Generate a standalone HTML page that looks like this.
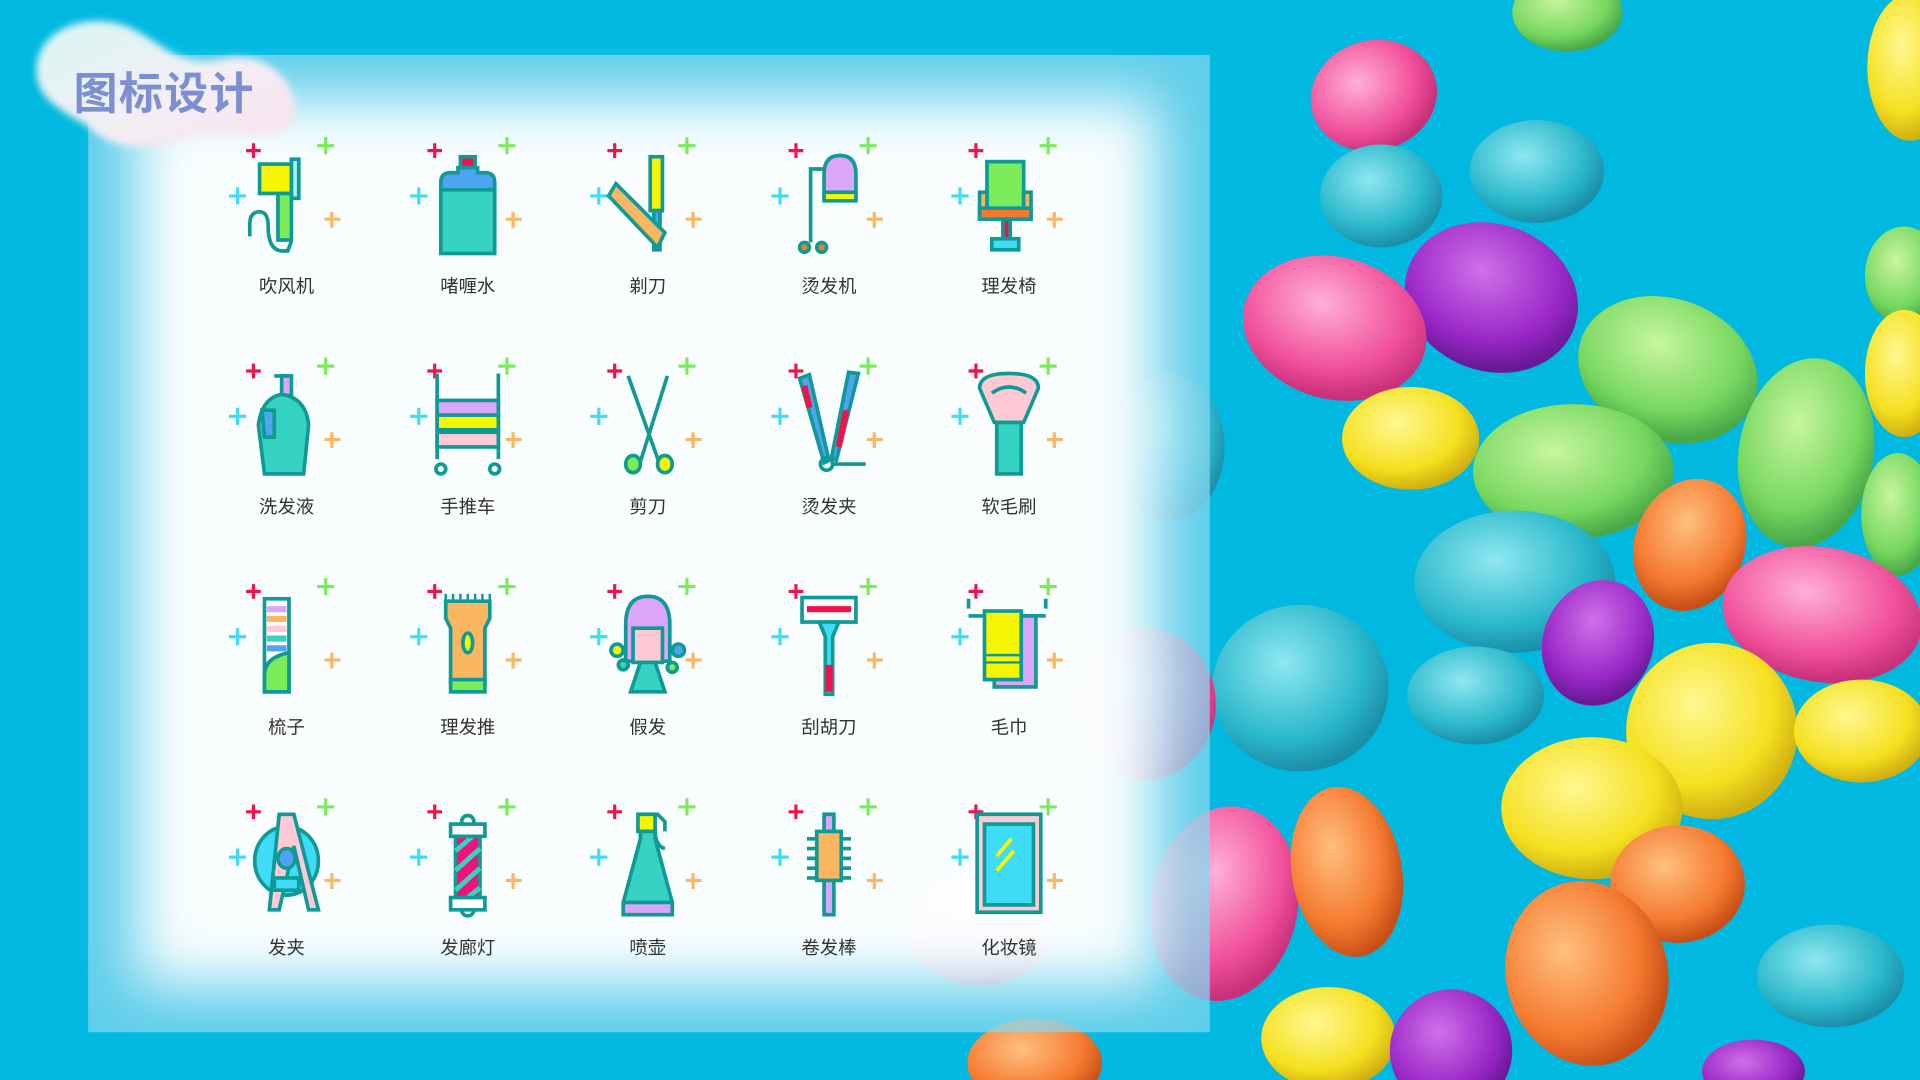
<!DOCTYPE html>
<html><head><meta charset="utf-8"><style>html,body{margin:0;padding:0;width:1920px;height:1080px;overflow:hidden;background:#00b8e0}svg{display:block}</style></head>
<body>
<svg width="1920" height="1080" viewBox="0 0 1568 882" preserveAspectRatio="none" xmlns="http://www.w3.org/2000/svg">
<defs>
<radialGradient id="gP" cx="40%" cy="35%" r="65%"><stop offset="0" stop-color="#ffb0d8"/><stop offset=".7" stop-color="#f0509a"/><stop offset="1" stop-color="#c8307a"/></radialGradient>
<radialGradient id="gT" cx="40%" cy="35%" r="65%"><stop offset="0" stop-color="#8fe8f0"/><stop offset=".7" stop-color="#2bb8cc"/><stop offset="1" stop-color="#1a8fa8"/></radialGradient>
<radialGradient id="gV" cx="40%" cy="35%" r="65%"><stop offset="0" stop-color="#d070e8"/><stop offset=".7" stop-color="#9a28c8"/><stop offset="1" stop-color="#6a1898"/></radialGradient>
<radialGradient id="gG" cx="40%" cy="35%" r="65%"><stop offset="0" stop-color="#c8f5a0"/><stop offset=".7" stop-color="#78d860"/><stop offset="1" stop-color="#48a848"/></radialGradient>
<radialGradient id="gY" cx="40%" cy="35%" r="65%"><stop offset="0" stop-color="#fff890"/><stop offset=".7" stop-color="#f5e020"/><stop offset="1" stop-color="#d0b010"/></radialGradient>
<radialGradient id="gO" cx="40%" cy="35%" r="65%"><stop offset="0" stop-color="#ffc080"/><stop offset=".7" stop-color="#f57a30"/><stop offset="1" stop-color="#c85018"/></radialGradient>
<linearGradient id="blob" x1="0" y1="0" x2="1" y2="1"><stop offset="0" stop-color="#d8f6f4"/><stop offset=".6" stop-color="#f4eef4"/><stop offset="1" stop-color="#fbe0ec"/></linearGradient>
<filter id="bl" x="-20%" y="-20%" width="140%" height="140%"><feGaussianBlur stdDeviation="24"/></filter>
<filter id="bl2"><feGaussianBlur stdDeviation="3"/></filter>
</defs>
<rect width="1568" height="882" fill="#00b8e0"/>
<g>
<ellipse cx="1280" cy="10" rx="45" ry="32" fill="url(#gG)"/>
<ellipse cx="1560" cy="55" rx="35" ry="60" fill="url(#gY)"/>
<ellipse cx="1122" cy="78" rx="52" ry="45" transform="rotate(-15 1122 78)" fill="url(#gP)"/>
<ellipse cx="1128" cy="160" rx="50" ry="42" fill="url(#gT)"/>
<ellipse cx="1255" cy="140" rx="55" ry="42" fill="url(#gT)"/>
<ellipse cx="1218" cy="243" rx="72" ry="60" transform="rotate(20 1218 243)" fill="url(#gV)"/>
<ellipse cx="1090" cy="268" rx="76" ry="58" transform="rotate(15 1090 268)" fill="url(#gP)"/>
<ellipse cx="1362" cy="302" rx="75" ry="58" transform="rotate(20 1362 302)" fill="url(#gG)"/>
<ellipse cx="1555" cy="225" rx="32" ry="40" fill="url(#gG)"/>
<ellipse cx="1555" cy="305" rx="32" ry="52" fill="url(#gY)"/>
<ellipse cx="1475" cy="370" rx="55" ry="78" transform="rotate(10 1475 370)" fill="url(#gG)"/>
<ellipse cx="1152" cy="358" rx="56" ry="42" fill="url(#gY)"/>
<ellipse cx="1285" cy="385" rx="82" ry="55" fill="url(#gG)"/>
<ellipse cx="1380" cy="445" rx="45" ry="55" transform="rotate(20 1380 445)" fill="url(#gO)"/>
<ellipse cx="1550" cy="420" rx="30" ry="50" fill="url(#gG)"/>
<ellipse cx="1237" cy="475" rx="82" ry="58" fill="url(#gT)"/>
<ellipse cx="1305" cy="525" rx="45" ry="52" transform="rotate(20 1305 525)" fill="url(#gV)"/>
<ellipse cx="1488" cy="502" rx="82" ry="55" transform="rotate(10 1488 502)" fill="url(#gP)"/>
<ellipse cx="1062" cy="562" rx="72" ry="68" fill="url(#gT)"/>
<ellipse cx="1205" cy="568" rx="56" ry="40" fill="url(#gT)"/>
<ellipse cx="1398" cy="597" rx="70" ry="72" fill="url(#gY)"/>
<ellipse cx="1520" cy="597" rx="55" ry="42" fill="url(#gY)"/>
<ellipse cx="1300" cy="660" rx="74" ry="58" fill="url(#gY)"/>
<ellipse cx="1000" cy="738" rx="60" ry="80" transform="rotate(10 1000 738)" fill="url(#gP)"/>
<ellipse cx="1100" cy="712" rx="45" ry="70" transform="rotate(-10 1100 712)" fill="url(#gO)"/>
<ellipse cx="1370" cy="722" rx="55" ry="48" fill="url(#gO)"/>
<ellipse cx="1296" cy="795" rx="66" ry="76" transform="rotate(-15 1296 795)" fill="url(#gO)"/>
<ellipse cx="1495" cy="797" rx="60" ry="42" fill="url(#gT)"/>
<ellipse cx="1085" cy="848" rx="55" ry="42" fill="url(#gY)"/>
<ellipse cx="1185" cy="858" rx="50" ry="50" fill="url(#gV)"/>
<ellipse cx="845" cy="868" rx="55" ry="36" fill="url(#gO)"/>
<ellipse cx="1432" cy="875" rx="42" ry="26" fill="url(#gV)"/>
<ellipse cx="935" cy="575" rx="58" ry="62" fill="url(#gP)"/>
<ellipse cx="955" cy="365" rx="45" ry="60" fill="url(#gT)"/>
<ellipse cx="800" cy="755" rx="60" ry="50" fill="url(#gP)"/>
</g>
<!-- panel -->
<rect x="72" y="45" width="916" height="798" fill="#7fd6ee" opacity=".75"/>
<rect x="110" y="80" width="835" height="725" fill="#ffffff" opacity=".97" filter="url(#bl)"/>
<!-- title blob -->
<path d="M30,62 C26,25 70,8 105,22 C135,35 145,58 185,48 C235,40 255,95 230,106 C205,116 180,104 155,112 C125,124 92,124 72,103 C48,90 32,80 30,62Z" fill="url(#blob)" filter="url(#bl2)"/>
<text x="60" y="89" font-family="Liberation Sans, Noto Sans CJK SC, sans-serif" font-size="36" font-weight="bold" fill="#7c8fd3" letter-spacing="1">图标设计</text>

<g font-family="Liberation Sans, Noto Sans CJK SC, sans-serif" font-size="15" fill="#333" text-anchor="middle">
<text x="234" y="239">吹风机</text><text x="382" y="239">啫喱水</text><text x="529" y="239">剃刀</text><text x="677" y="239">烫发机</text><text x="824" y="239">理发椅</text>
<text x="234" y="419">洗发液</text><text x="382" y="419">手推车</text><text x="529" y="419">剪刀</text><text x="677" y="419">烫发夹</text><text x="824" y="419">软毛刷</text>
<text x="234" y="599">梳子</text><text x="382" y="599">理发推</text><text x="529" y="599">假发</text><text x="677" y="599">刮胡刀</text><text x="824" y="599">毛巾</text>
<text x="234" y="779">发夹</text><text x="382" y="779">发廊灯</text><text x="529" y="779">喷壶</text><text x="677" y="779">卷发棒</text><text x="824" y="779">化妆镜</text>
</g>

<defs>
<g id="plus" stroke-width="2.6" fill="none">
<path d="M-33,-42 h12 M-27,-48 v12" stroke="#f2124a"/>
<path d="M25,-46 h14 M32,-53 v14" stroke="#7ceb5a"/>
<path d="M-47,-5 h14 M-40,-12 v14" stroke="#3fdcf7"/>
<path d="M31,14 h13 M37,8 v13" stroke="#fbb661"/>
</g>
</defs>

<g stroke="#109a96" stroke-width="3" stroke-linejoin="miter">
<g transform="translate(234,165)"><use href="#plus"/>
<rect x="-22" y="-31" width="26" height="24" fill="#f6f600"/><rect x="4" y="-35" width="6" height="32" fill="#a8f0f0"/>
<rect x="-7" y="-7" width="11" height="38" fill="#7ceb5a"/>
<path d="M-30,28 v-10 q0-10 8-10 q7 0 7 12 q0 20 12 20 h4 l3-8" fill="none"/></g>
<g transform="translate(382,165)"><use href="#plus"/>
<rect x="-6" y="-37" width="12" height="10" fill="#f2124a"/>
<path d="M-22,-10 v-6 q0-8 8-8 h6 v-4 h16 v4 h6 q8 0 8 8 v6z" fill="#4ea4f2"/>
<rect x="-22" y="-10" width="44" height="52" fill="#36d3c3"/></g>
<g transform="translate(529,165)"><use href="#plus"/>
<rect x="2" y="-37" width="10" height="44" fill="#f6f600"/><rect x="5" y="7" width="5" height="32" fill="#4ea4f2"/>
<path d="M-32,-5 l6,-10 l40,40 l-6,12z" fill="#fbb661"/></g>
<g transform="translate(677,165)"><use href="#plus"/>
<path d="M-15,33 v-60 h10" fill="none"/><path d="M-4,-5 v-18 q0-15 13-15 q13 0 13 15 v18z" fill="#dba6f7"/>
<rect x="-4" y="-8" width="26" height="7" fill="#f6f600"/>
<circle cx="-20" cy="37" r="4" fill="#f57a30"/><circle cx="-6" cy="37" r="4" fill="#f57a30"/></g>
<g transform="translate(824,165)"><use href="#plus"/>
<rect x="-18" y="-33" width="30" height="40" fill="#7ceb5a"/>
<rect x="-24" y="-8" width="6" height="22" fill="#fbb661"/><rect x="12" y="-8" width="6" height="22" fill="#fbb661"/>
<rect x="-24" y="5" width="42" height="9" fill="#f57a30"/><rect x="-5" y="14" width="6" height="16" fill="#f2124a"/>
<rect x="-14" y="30" width="22" height="9" fill="#3fdcf7"/></g>
<g transform="translate(234,345)"><use href="#plus"/>
<path d="M-10,-38 h10 v14" fill="none"/><rect x="-4" y="-38" width="8" height="16" fill="#dba6f7"/>
<path d="M-18,42 l-5-40 q3-22 19-25 q20 3 22 25 l-4 40z" fill="#36d3c3"/>
<path d="M-20,-10 h10 v22 h-8z" fill="#4ea4f2"/></g>
<g transform="translate(382,345)"><use href="#plus"/>
<path d="M-25,-40 v70 M25,-40 v70" fill="none"/>
<rect x="-25" y="-18" width="50" height="12" fill="#dba6f7"/><rect x="-25" y="-6" width="50" height="12" fill="#f6f600"/><rect x="-25" y="8" width="50" height="12" fill="#ffcad5"/>
<circle cx="-22" cy="38" r="4" fill="none"/><circle cx="22" cy="38" r="4" fill="none"/></g>
<g transform="translate(529,345)"><use href="#plus"/>
<path d="M-16,-38 l25,70 M16,-38 l-22,70" fill="none"/>
<ellipse cx="-12" cy="34" rx="6" ry="7" fill="#7ceb5a"/><ellipse cx="14" cy="34" rx="6" ry="7" fill="#f6f600"/></g>
<g transform="translate(677,345)"><use href="#plus"/>
<path d="M-24,-36 l8,-3 l16,70 l-4,2z" fill="#4ea4f2"/><path d="M-20,-30 l4,18" stroke="#f2124a" stroke-width="5"/>
<path d="M24,-40 l-8,-1 l-14,70 l4,2z" fill="#4ea4f2"/><path d="M14,-10 l-6,30" stroke="#f2124a" stroke-width="5"/>
<circle cx="-2" cy="34" r="5" fill="none"/><path d="M2,34 h28" fill="none"/></g>
<g transform="translate(824,345)"><use href="#plus"/>
<path d="M-12,0 l-12,-28 q0-12 24-12 q24 0 24 12 l-12 28z" fill="#ffcad5"/><path d="M-14,-24 q14-10 28 0" fill="none"/>
<rect x="-10" y="0" width="20" height="42" fill="#36d3c3"/></g>
<g transform="translate(234,525)"><use href="#plus"/>
<rect x="-18" y="-36" width="20" height="76" fill="#fff"/>
<rect x="-16" y="-30" width="16" height="5" fill="#dba6f7" stroke="none"/><rect x="-16" y="-22" width="16" height="5" fill="#fbb661" stroke="none"/><rect x="-16" y="-14" width="16" height="5" fill="#ffcad5" stroke="none"/><rect x="-16" y="-6" width="16" height="5" fill="#36d3c3" stroke="none"/><rect x="-16" y="2" width="16" height="5" fill="#4ea4f2" stroke="none"/>
<path d="M-18,40 v-14 q0-14 20-18 v32z" fill="#7ceb5a"/></g>
<g transform="translate(382,525)"><use href="#plus"/>
<path d="M-18,-34 v-6 M-12,-34 v-6 M-6,-34 v-6 M0,-34 v-6 M6,-34 v-6 M12,-34 v-6 M18,-34 v-6" fill="none" stroke-width="2"/>
<path d="M-18,-34 h36 v14 l-4,8 v45 h-28 v-45 l-4,-8z" fill="#fbb661"/>
<rect x="-14" y="30" width="28" height="10" fill="#7ceb5a"/><ellipse cx="0" cy="0" rx="4" ry="8" fill="#f6f600"/></g>
<g transform="translate(529,525)"><use href="#plus"/>
<path d="M-18,15 v-30 q0-23 18-23 q18 0 18 23 v30z" fill="#dba6f7"/>
<rect x="-12" y="-12" width="24" height="28" fill="#ffcad5"/>
<path d="M-6,16 l-8,24 h28 l-8,-24z" fill="#36d3c3"/>
<circle cx="-25" cy="6" r="5" fill="#f6f600"/><circle cx="-20" cy="18" r="4" fill="#36d3c3"/><circle cx="25" cy="6" r="5" fill="#4ea4f2"/><circle cx="20" cy="20" r="4" fill="#7ceb5a"/></g>
<g transform="translate(677,525)"><use href="#plus"/>
<rect x="-22" y="-37" width="44" height="20" fill="#fff"/><rect x="-18" y="-30" width="36" height="5" fill="#f2124a" stroke="none"/>
<path d="M-8,-17 l5,12 v47 h6 v-47 l5,-12z" fill="#3fdcf7"/><rect x="-3" y="18" width="6" height="22" fill="#f2124a" stroke="none"/></g>
<g transform="translate(824,525)"><use href="#plus"/>
<path d="M-33,-28 v-8 M30,-28 v-8 M-33,-22 h63" fill="none"/>
<rect x="-12" y="-22" width="34" height="58" fill="#dba6f7"/>
<rect x="-20" y="-26" width="30" height="56" fill="#f6f600"/><path d="M-20,10 h30 M-20,16 h30" stroke-width="2"/></g>
<g transform="translate(234,705)"><use href="#plus"/>
<ellipse cx="0" cy="-2" rx="26" ry="28" fill="#3fdcf7"/>
<path d="M-6,-40 h12 l20,78 h-8 l-12,-52 l-12,52 h-8z" fill="#ffcad5"/>
<ellipse cx="0" cy="-4" rx="7" ry="8" fill="#4ea4f2"/><path d="M-10,12 h20 v10 h-20z" fill="#3fdcf7"/></g>
<g transform="translate(382,705)"><use href="#plus"/>
<circle cx="0" cy="-34" r="5" fill="none"/><circle cx="0" cy="38" r="5" fill="none"/>
<rect x="-10" y="-22" width="20" height="50" fill="#f0117a"/>
<path d="M-10,-10 l14,-12 M-10,6 l20,-18 M-10,22 l20,-18 M0,28 l10,-8" stroke="#36d3c3" stroke-width="4"/>
<rect x="-14" y="-32" width="28" height="10" fill="#fff"/><rect x="-14" y="28" width="28" height="10" fill="#fff"/></g>
<g transform="translate(529,705)"><use href="#plus"/>
<path d="M-8,-40 h16 l6,6 v8" fill="none"/><rect x="-8" y="-40" width="14" height="14" fill="#f6f600"/>
<path d="M6,-28 q0,14 8,16" fill="none"/>
<path d="M-6,-26 h12 v6 l14,52 v10 h-40 v-10 l14,-52z" fill="#36d3c3"/>
<rect x="-20" y="32" width="40" height="10" fill="#dba6f7"/></g>
<g transform="translate(677,705)"><use href="#plus"/>
<rect x="-4" y="-40" width="8" height="82" fill="#dba6f7"/>
<rect x="-10" y="-26" width="20" height="40" fill="#fbb661"/>
<path d="M-10,-20 h-8 M-10,-12 h-8 M-10,-4 h-8 M-10,4 h-8 M-10,12 h-8 M10,-20 h8 M10,-12 h8 M10,-4 h8 M10,4 h8 M10,12 h8" fill="none"/></g>
<g transform="translate(824,705)"><use href="#plus"/>
<rect x="-26" y="-40" width="52" height="80" fill="#ffcad5"/>
<rect x="-20" y="-32" width="40" height="66" fill="#3fdcf7"/>
<path d="M-10,-6 l12,-14 M-10,6 l14,-16" stroke="#f6f600" stroke-width="3"/></g>
</g>
</svg>
</body></html>
